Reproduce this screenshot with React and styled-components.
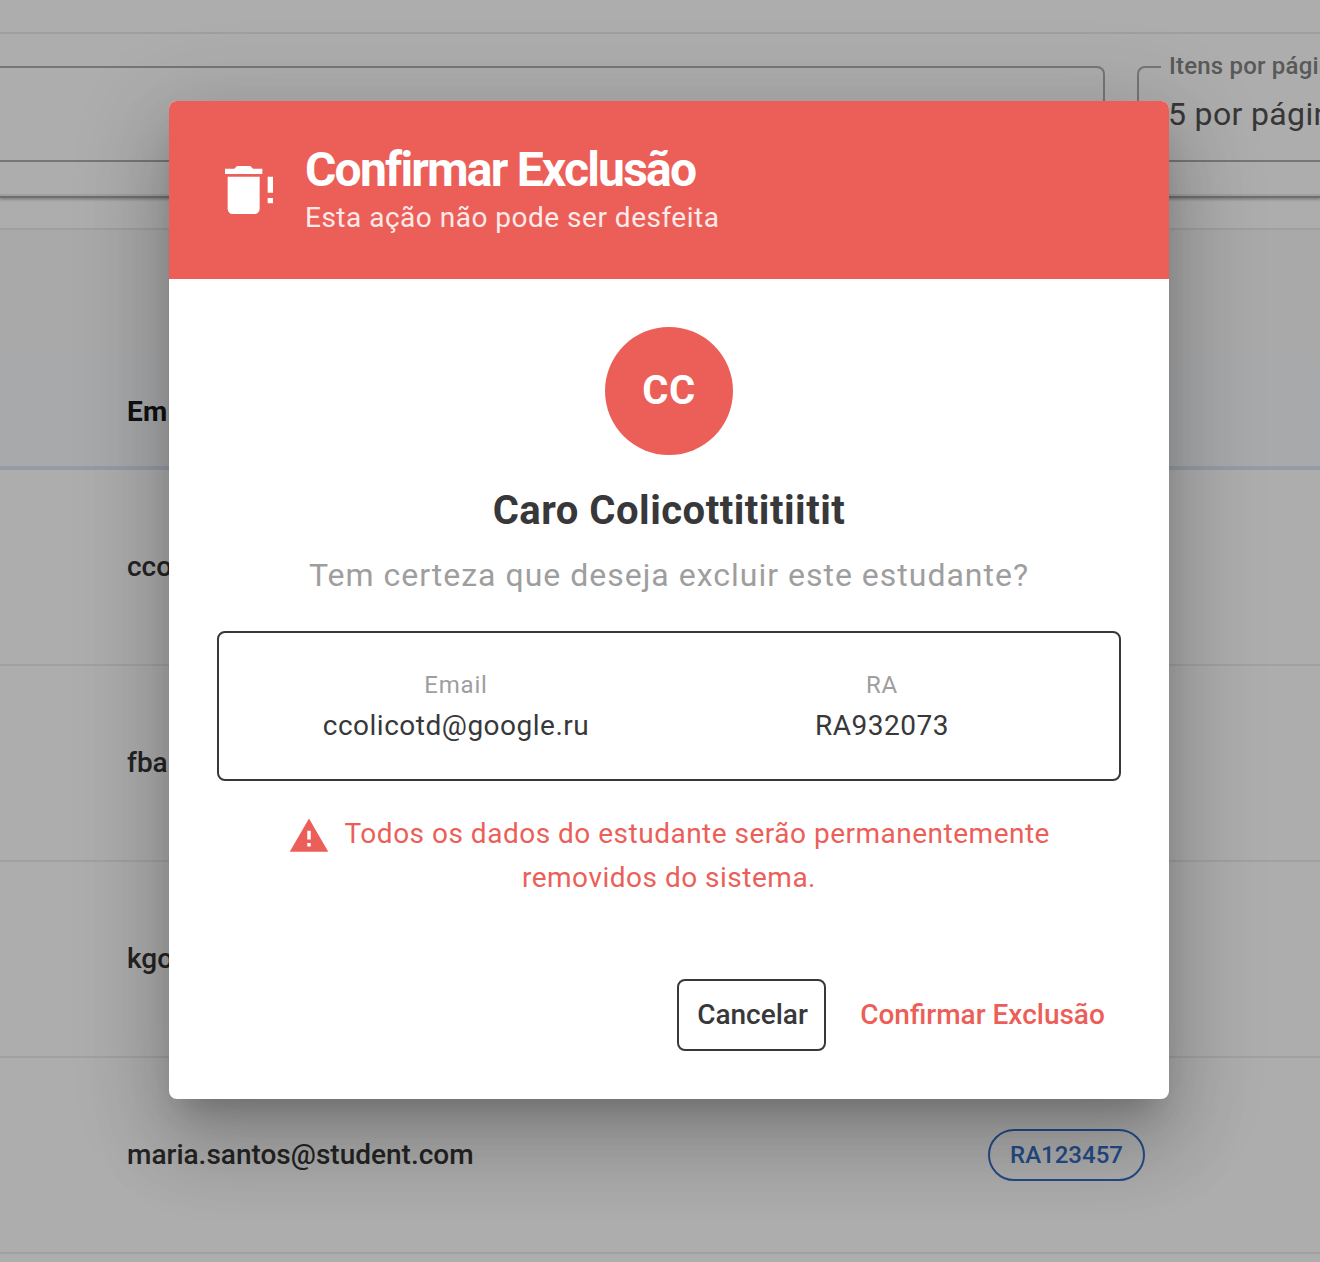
import React from "react";
import styled, { createGlobalStyle } from "styled-components";

const GlobalStyle = createGlobalStyle`
  *, *::before, *::after { box-sizing: border-box; }
  html, body { margin: 0; padding: 0; }
  body {
    font-family: Roboto, "Liberation Sans", sans-serif;
    background: #fff;
    overflow: hidden;
  }
`;

const Screen = styled.div`
  position: relative;
  width: 1320px;
  height: 1262px;
  overflow: hidden;
  background: #fff;
`;

const Page = styled.div`
  display: flex;
  flex-direction: column;
  gap: 32px;
  padding-top: 32px;
`;

const FilterCard = styled.section`
  display: flex;
  gap: 32px;
  height: 164px;
  padding-top: 20px;
  border-top: 2px solid #ebebeb;
  border-bottom: 2px solid #ebebeb;
  box-shadow: 0 2px 0 0 #a4a4a4, 0 4px 2px 0 rgba(0, 0, 0, 0.22);
`;

const Outline = styled.fieldset`
  flex: none;
  margin: 0;
  padding: 0;
  min-width: 0;
  border: 2px solid #aeaeae;
  border-radius: 8px;
`;

const SearchField = styled(Outline)`
  width: 1105px;
  height: 96px;
  margin-top: 12px;
  border-left: 0;
  border-top-left-radius: 0;
  border-bottom-left-radius: 0;
`;

const SelectField = styled(Outline)`
  width: 400px;
  height: 108px;
`;

const FieldLabel = styled.legend`
  margin-left: 22px;
  padding: 0 8px 2px;
  font-size: 24px;
  line-height: 24px;
  font-weight: 500;
  letter-spacing: 0.2px;
  color: #848484;
`;

const FieldValue = styled.div`
  padding: 10px 29px;
  font-size: 32px;
  line-height: 48px;
  letter-spacing: 0.35px;
  white-space: nowrap;
  color: #525252;
`;

const TableCard = styled.section`
  border-top: 2px solid #ebebeb;
`;

const TableTitle = styled.header`
  height: 130px;
  background: #f9f9f9;
`;

const HeadRow = styled.div`
  display: flex;
  align-items: center;
  height: 110px;
  padding: 0 127px 4px;
  background: #f8fafd;
  border-bottom: 4px solid #dee6f3;
  font-size: 28px;
  font-weight: 700;
  letter-spacing: 0.3px;
  color: #18181a;
`;

const Row = styled.div`
  display: flex;
  align-items: center;
  height: 196px;
  padding-left: 127px;
  border-bottom: 2px solid #eee;
`;

const EmailCell = styled.div`
  width: 861px;
  padding-bottom: 2px;
  font-size: 28px;
  font-weight: 500;
  color: #363636;
`;

const Chip = styled.span`
  display: flex;
  align-items: center;
  justify-content: center;
  width: 157px;
  height: 52px;
  border: 2px solid #3670c8;
  border-radius: 26px;
  font-size: 24px;
  font-weight: 500;
  color: #3670c8;
`;

const Overlay = styled.div`
  position: absolute;
  inset: 0;
  padding: 101px 0 0 169px;
  background: rgba(0, 0, 0, 0.32);
`;

const Dialog = styled.div`
  display: flex;
  flex-direction: column;
  width: 1000px;
  height: 998px;
  border-radius: 8px;
  overflow: hidden;
  background: #fff;
  box-shadow: 0 22px 30px -14px rgba(0, 0, 0, 0.2),
    0 48px 76px 6px rgba(0, 0, 0, 0.14), 0 18px 92px 16px rgba(0, 0, 0, 0.12);
`;

const DialogHeader = styled.header`
  display: flex;
  align-items: center;
  gap: 24px;
  height: 178px;
  padding: 0 48px;
  background: #ec5f59;
  color: #fff;
`;

const HeaderText = styled.div`
  display: flex;
  flex-direction: column;
  padding-bottom: 1px;
`;

const Title = styled.h1`
  margin: 0;
  font-size: 48px;
  line-height: 56px;
  font-weight: 700;
  letter-spacing: -1.8px;
`;

const Subtitle = styled.p`
  margin: 0;
  font-size: 28px;
  line-height: 40px;
  letter-spacing: 0.5px;
  opacity: 0.87;
`;

const DialogBody = styled.div`
  display: flex;
  flex-direction: column;
  align-items: center;
  padding: 48px 48px 0;
`;

const Avatar = styled.div`
  display: flex;
  align-items: center;
  justify-content: center;
  width: 128px;
  height: 128px;
  padding-bottom: 2px;
  border-radius: 50%;
  background: #ec5f59;
  color: #fff;
  font-size: 40px;
  font-weight: 700;
  letter-spacing: 0.5px;
`;

const StudentName = styled.h2`
  margin: 24px 0 8px;
  font-size: 40px;
  line-height: 64px;
  font-weight: 700;
  letter-spacing: 0.5px;
  color: #38383a;
`;

const Question = styled.p`
  margin: 0 0 32px;
  font-size: 32px;
  line-height: 48px;
  letter-spacing: 1px;
  color: #9e9e9e;
`;

const InfoBox = styled.dl`
  display: grid;
  grid-template-columns: 1fr 1fr;
  align-self: stretch;
  height: 150px;
  margin: 0 0 31px;
  padding: 32px 24px 30px;
  border: 2px solid #38383a;
  border-radius: 8px;
  text-align: center;
`;

const InfoLabel = styled.dt`
  font-size: 24px;
  line-height: 40px;
  letter-spacing: 0.8px;
  color: #9e9e9e;
`;

const InfoValue = styled.dd`
  margin: 0;
  font-size: 28px;
  line-height: 42px;
  letter-spacing: 0.5px;
  color: #38383a;
`;

const Warning = styled.p`
  margin: 0;
  width: 780px;
  text-align: center;
  font-size: 28px;
  line-height: 44px;
  letter-spacing: 0.5px;
  color: #ec5f59;

  svg {
    margin: -6px 14.5px -6px 0;
    vertical-align: -7.5px;
  }
`;

const Actions = styled.footer`
  display: flex;
  justify-content: flex-end;
  gap: 18px;
  margin-top: auto;
  padding: 0 48px 48px;
`;

const Button = styled.button`
  display: flex;
  align-items: center;
  justify-content: center;
  width: ${(p) => p.$width}px;
  height: 72px;
  padding: 0 0 2px ${(p) => (p.$danger ? 0 : 2)}px;
  border: 2px solid ${(p) => (p.$danger ? "transparent" : "#38383a")};
  border-radius: 8px;
  background: transparent;
  font: 500 28px Roboto, "Liberation Sans", sans-serif;
  white-space: nowrap;
  color: ${(p) => (p.$danger ? "#ec5f59" : "#38383a")};
`;

const Icon = ({ size, d }) => (
  <svg width={size} height={size} viewBox="0 0 24 24" fill="currentColor" aria-hidden="true">
    <path d={d} />
  </svg>
);

const deleteAlert =
  "M17 4V6H3V4H6.5L7.5 3H12.5L13.5 4H17M4 19V7H16V19C16 20.1 15.1 21 14 21H6C4.9 21 4 20.1 4 19M19 15H21V17H19V15M19 7H21V13H19V7Z";
const alert = "M13 14H11V9H13M13 18H11V16H13M1 21H23L12 2L1 21Z";

const rows = [
  { email: "cco" },
  { email: "fba" },
  { email: "kgo" },
  { email: "maria.santos@student.com", ra: "RA123457" },
];

export default function App() {
  return (
    <Screen>
      <GlobalStyle />
      <Page>
        <FilterCard>
          <SearchField />
          <SelectField>
            <FieldLabel>Itens por página</FieldLabel>
            <FieldValue>5 por página</FieldValue>
          </SelectField>
        </FilterCard>
        <TableCard>
          <TableTitle />
          <HeadRow>Em</HeadRow>
          {rows.map((row) => (
            <Row key={row.email}>
              <EmailCell>{row.email}</EmailCell>
              {row.ra && <Chip>{row.ra}</Chip>}
            </Row>
          ))}
        </TableCard>
      </Page>
      <Overlay>
        <Dialog role="dialog">
          <DialogHeader>
            <Icon size={64} d={deleteAlert} />
            <HeaderText>
              <Title>Confirmar Exclusão</Title>
              <Subtitle>Esta ação não pode ser desfeita</Subtitle>
            </HeaderText>
          </DialogHeader>
          <DialogBody>
            <Avatar>CC</Avatar>
            <StudentName>Caro Colicottititiitit</StudentName>
            <Question>Tem certeza que deseja excluir este estudante?</Question>
            <InfoBox>
              <div>
                <InfoLabel>Email</InfoLabel>
                <InfoValue>ccolicotd@google.ru</InfoValue>
              </div>
              <div>
                <InfoLabel>RA</InfoLabel>
                <InfoValue>RA932073</InfoValue>
              </div>
            </InfoBox>
            <Warning>
              <Icon size={42} d={alert} />
              Todos os dados do estudante serão permanentemente removidos do sistema.
            </Warning>
          </DialogBody>
          <Actions>
            <Button $width={149}>Cancelar</Button>
            <Button $width={277} $danger>
              Confirmar Exclusão
            </Button>
          </Actions>
        </Dialog>
      </Overlay>
    </Screen>
  );
}
